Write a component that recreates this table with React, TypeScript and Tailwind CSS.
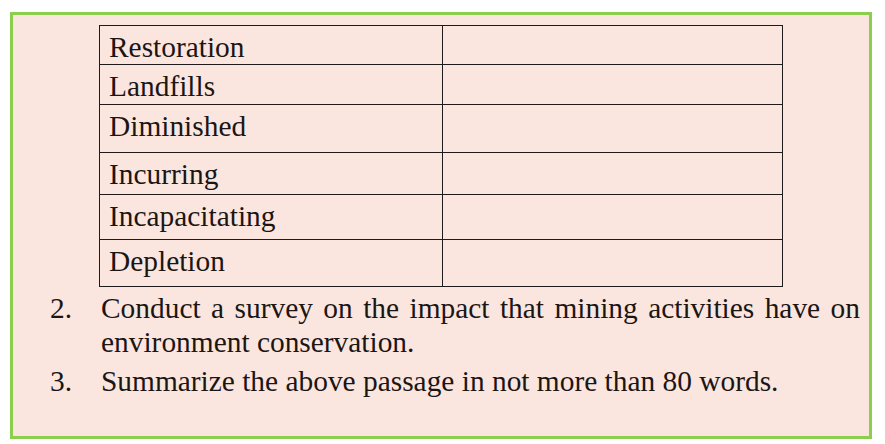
import React from 'react';

const rows: { word: string; h: string }[] = [
  { word: 'Restoration', h: 'h-[39px]' },
  { word: 'Landfills', h: 'h-[40px]' },
  { word: 'Diminished', h: 'h-[48px]' },
  { word: 'Incurring', h: 'h-[42px]' },
  { word: 'Incapacitating', h: 'h-[45px]' },
  { word: 'Depletion', h: 'h-[47px]' },
];

const App: React.FC = () => {
  return (
    <div className="w-[885px] h-[444px] bg-white pt-[12px] pl-[10px] font-['Liberation_Serif',serif] text-[#1b1614]">
      <div className="w-[862px] h-[427px] border-[3px] border-[#8cce4e] bg-[#fbe6df]">
        {/* word table */}
        <div className="ml-[86px] mt-[10px] w-[684px] border-[1.5px] border-b-0 border-[#1f1b1c]">
          {rows.map((r) => (
            <div key={r.word} className={`flex border-b-[1.5px] border-[#1f1b1c] ${r.h}`}>
              <div className="w-[343px] border-r-[1.5px] border-[#1f1b1c] pl-[9px] pt-[4px] text-[29.4px] leading-[34px]">
                {r.word}
              </div>
              <div className="flex-1" />
            </div>
          ))}
        </div>

        {/* questions */}
        <ol className="mt-[4px] pl-[37px] pr-[9px] text-[29.4px] leading-[34px]">
          <li className="flex">
            <span className="w-[51px] shrink-0">2.</span>
            <span className="text-justify [text-align-last:left]">
              Conduct a survey on the impact that mining activities have on environment conservation.
            </span>
          </li>
          <li className="flex mt-[5px]">
            <span className="w-[51px] shrink-0">3.</span>
            <span>Summarize the above passage in not more than 80 words.</span>
          </li>
        </ol>
      </div>
    </div>
  );
};

export default App;
